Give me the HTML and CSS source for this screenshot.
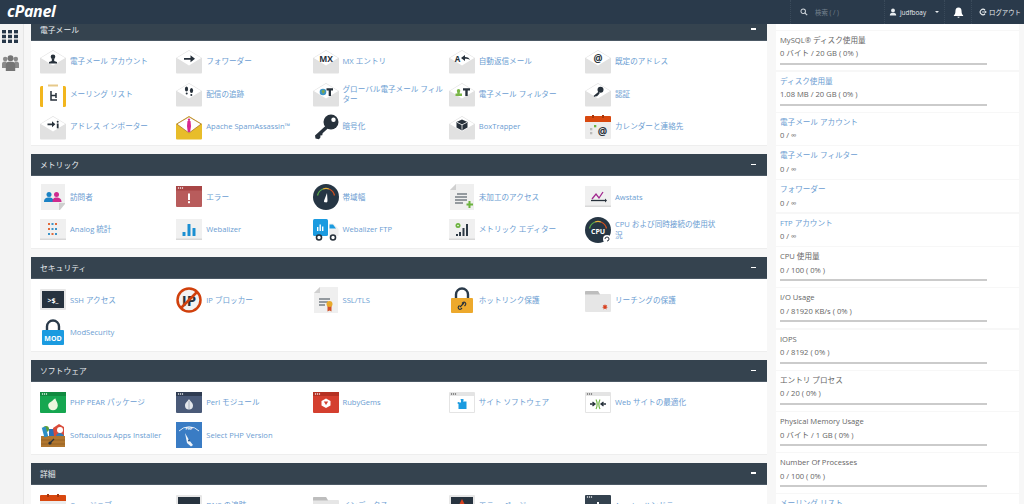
FILE: index.html
```html
<!DOCTYPE html>
<html lang="ja">
<head>
<meta charset="utf-8">
<title>cPanel</title>
<link rel="stylesheet" href="styles.css">
</head>
<body>
<svg class="sprite" aria-hidden="true">
  <defs>
    <symbol id="env" viewBox="0 0 26 26">
      <path d="M0 10 13 2 26 10V24.500a1 1 0 0 1-1 1H1a1 1 0 0 1-1-1Z" fill="#e1e1e1"/>
      <path d="M.8 10 13 2.800 25.200 10 13 17.500Z" fill="#fff"/>
    </symbol>
    <symbol id="card" viewBox="0 0 26 26">
      <rect y="2" width="26" height="21" fill="#f0f0f0"/>
      <rect y="21.500" width="26" height="1.500" fill="#d8d8d8"/>
    </symbol>
    <symbol id="doc" viewBox="0 0 26 26">
      <path d="M7 0H25V26H1V6Z" fill="#efefef"/>
      <path d="M7 0V6H1Z" fill="#d0d0d0"/>
    </symbol>
    <symbol id="cal" viewBox="0 0 26 26">
      <rect y="2" width="26" height="23" rx="1" fill="#ececec"/>
      <path d="M0 8V3a1 1 0 0 1 1-1H25a1 1 0 0 1 1 1V8Z" fill="#d8480f"/>
      <rect x="7" y="1" width="2" height="3" fill="#a8360a"/>
      <rect x="17" y="1" width="2" height="3" fill="#a8360a"/>
    </symbol>
    <symbol id="folder" viewBox="0 0 26 26">
      <path d="M0 5a1 1 0 0 1 1-1H13L15 7H25a1 1 0 0 1 1 1V24a1 1 0 0 1-1 1H1a1 1 0 0 1-1-1Z" fill="#e6e6e6"/>
      <path d="M0 5a1 1 0 0 1 1-1H13L15 7.500H0Z" fill="#bdbdbd"/>
    </symbol>
    <symbol id="gauge" viewBox="0 0 26 26">
      <circle cx="13" cy="13" r="13" fill="#263644"/>
      <path d="M4.500 11.500A9 9 0 0 1 10 5" fill="none" stroke="#5aa84a" stroke-width="1.300"/>
      <path d="M10 5A9 9 0 0 1 16 5" fill="none" stroke="#e8b23a" stroke-width="1.300"/>
      <path d="M16 5A9 9 0 0 1 21.500 11.500" fill="none" stroke="#d4501e" stroke-width="1.300"/>
    </symbol>
    <symbol id="win" viewBox="0 0 26 26">
      <rect y="2" width="26" height="21" rx="1" fill="#e4e4e4"/>
      <rect x="1" y="6" width="24" height="16" fill="#fff"/>
      <circle cx="2.500" cy="4" r=".7" fill="#555"/><circle cx="4.500" cy="4" r=".7" fill="#555"/><circle cx="6.500" cy="4" r=".7" fill="#555"/>
    </symbol>
    <symbol id="dots" viewBox="0 0 26 26">
      <circle cx="2.500" cy="4" r=".7" fill="#fff"/><circle cx="4.500" cy="4" r=".7" fill="#fff"/><circle cx="6.500" cy="4" r=".7" fill="#fff"/>
    </symbol>
  </defs>
</svg>

<header class="topbar">
  <span class="logo">cPanel</span>
  <div class="tools">
    <div class="tool search">
      <svg class="ti" viewBox="0 0 10 10"><circle cx="4" cy="4" r="2.800" fill="none" stroke="#cfd5db" stroke-width="1.300"/><path d="M6 6 9 9" stroke="#cfd5db" stroke-width="1.500"/></svg>
      <span class="search-text">検索 ( / )</span>
    </div>
    <div class="tool user">
      <svg class="ti" viewBox="0 0 10 10"><circle cx="5" cy="3" r="2.400" fill="#e8ecef"/><path d="M1 9.500C1 6.500 3 6 5 6s4 .5 4 3.500Z" fill="#e8ecef"/></svg>
      <span>judfboay</span>
      <span class="caret"></span>
    </div>
    <div class="tool bell">
      <svg class="bi" viewBox="0 0 10 10"><path d="M5 .5C3 .5 2.200 2 2.200 4c0 2-.7 3-1.400 3.600V8.200H9.200V7.600C8.500 7 7.800 6 7.800 4 7.800 2 7 .5 5 .5Z" fill="#fff"/><path d="M4 8.800h2a1 1 0 0 1-2 0Z" fill="#fff"/></svg>
    </div>
    <div class="tool logout">
      <svg class="ti" viewBox="0 0 10 10"><path d="M7.500 2.500A3.500 3.500 0 1 0 7.500 7.500" fill="none" stroke="#e8ecef" stroke-width="1.400"/><path d="M4 5H9M7.200 3.200 9 5 7.200 6.800" fill="none" stroke="#e8ecef" stroke-width="1.200"/></svg>
      <span>ログアウト</span>
    </div>
  </div>
</header>

<div class="layout">
  <nav class="rail">
    <svg class="rail-grid" viewBox="0 0 16 13">
      <g fill="#27384a"><rect width="4" height="3.400"/><rect x="6" width="4" height="3.400"/><rect x="12" width="4" height="3.400"/><rect y="4.800" width="4" height="3.400"/><rect x="6" y="4.800" width="4" height="3.400"/><rect x="12" y="4.800" width="4" height="3.400"/><rect y="9.600" width="4" height="3.400"/><rect x="6" y="9.600" width="4" height="3.400"/><rect x="12" y="9.600" width="4" height="3.400"/></g>
    </svg>
    <svg class="rail-users" viewBox="0 0 17 16">
      <g fill="#8a8a8a"><circle cx="3.200" cy="4" r="2.300"/><circle cx="13.800" cy="4" r="2.300"/><path d="M0 13V9a2.500 2.500 0 0 1 2.500-2.500h2V13Z"/><path d="M17 13V9a2.500 2.500 0 0 0-2.500-2.500h-2V13Z"/></g>
      <g fill="#757575"><circle cx="8.500" cy="3.200" r="3"/><path d="M3.800 16V9.500A3 3 0 0 1 6.800 6.800h3.400a3 3 0 0 1 3 2.700V16Z"/></g>
    </svg>
  </nav>

  <main class="main">
    <section class="panel">
      <h2 class="panel-head"><span>電子メール</span><i class="minus"></i></h2>
      <div class="grid">
        <a class="item"><svg class="ic" viewBox="0 0 26 26"><use href="#env"/><circle cx="13" cy="8.700" r="2.300" fill="#27313b"/><path d="M11.800 10.500h2.400v2.500l2.800 1v1.500H9V14l2.800-1Z" fill="#27313b"/></svg><span>電子メール アカウント</span></a>
        <a class="item"><svg class="ic" viewBox="0 0 26 26"><use href="#env"/><path d="M8 10h6.500V7.300L19 10.800l-4.500 3.500V11.700H8Z" fill="#27313b"/></svg><span>フォワーダー</span></a>
        <a class="item"><svg class="ic" viewBox="0 0 26 26"><use href="#env"/><text x="13" y="13.500" class="ict" font-size="8.500">MX</text></svg><span>MX エントリ</span></a>
        <a class="item"><svg class="ic" viewBox="0 0 26 26"><use href="#env"/><text x="8.500" y="13.500" class="ict" font-size="8">A</text><path d="M12 10l4-3v2c3 0 4 1 5 3-1.500-1-3-1.200-5-1.200V13Z" fill="#27313b"/></svg><span>自動返信メール</span></a>
        <a class="item"><svg class="ic" viewBox="0 0 26 26"><use href="#env"/><text x="13" y="14" class="ict" font-size="10">@</text></svg><span>既定のアドレス</span></a>

        <a class="item"><svg class="ic" viewBox="0 0 26 26"><rect y="5" width="26" height="21" rx="1.500" fill="#f2b61e"/><rect x="3" y="4" width="20" height="22" fill="#fff"/><path d="M8 3.500h10v2H8Z" fill="#e6c98a"/><path d="M11 10v9h6M11 14.500h5M16 12v5" fill="none" stroke="#27313b" stroke-width="1.500"/></svg><span>メーリング リスト</span></a>
        <a class="item"><svg class="ic" viewBox="0 0 26 26"><use href="#env"/><ellipse cx="10.500" cy="8" rx="1.600" ry="2.500" fill="#27313b"/><circle cx="10.700" cy="12.500" r="1" fill="#27313b"/><ellipse cx="15.500" cy="9.500" rx="1.600" ry="2.500" fill="#27313b"/><circle cx="15.300" cy="14" r="1" fill="#27313b"/></svg><span>配信の追跡</span></a>
        <a class="item"><svg class="ic" viewBox="0 0 26 26"><use href="#env"/><circle cx="10" cy="11" r="3.300" fill="#3a93c8"/><path d="M8.500 10l2-1.500 1.500 2-2 2.500Z" fill="#7fa64a"/><path d="M13.500 7.200h6.500V9.500h-2V15H15.700V9.500h-2.200Z" fill="#27313b"/></svg><span>グローバル電子メール フィルター</span></a>
        <a class="item"><svg class="ic" viewBox="0 0 26 26"><use href="#env"/><path d="M8 7a1.800 1.800 0 0 1 1.800 1.800L9 11.500h2.500V14H5V11.500H7L6.300 8.800A1.800 1.800 0 0 1 8 7Z" fill="#7ab648" transform="translate(1.500 1)"/><path d="M14 7.200h7V9.500h-2.300V15H16.300V9.500H14Z" fill="#27313b"/></svg><span>電子メール フィルター</span></a>
        <a class="item"><svg class="ic" viewBox="0 0 26 26"><use href="#env"/><circle cx="15.500" cy="8.800" r="3" fill="#27313b"/><path d="M13.800 10.500 8.500 15l1.300 1 1.200-1 .8.600 2.800-3Z" fill="#27313b"/></svg><span>認証</span></a>

        <a class="item"><svg class="ic" viewBox="0 0 26 26"><use href="#env"/><path d="M7.500 9.500h4.500V7.300l3.300 3-3.300 3V11.200H7.500Z" fill="#27313b"/><rect x="16.800" y="9.500" width="1.800" height="4.800" fill="#27313b"/><circle cx="17.700" cy="7.800" r="1" fill="#27313b"/></svg><span>アドレス インポーター</span></a>
        <a class="item"><svg class="ic" viewBox="0 0 26 26"><path d="M0 10 13 2 26 10V24.500a1 1 0 0 1-1 1H1a1 1 0 0 1-1-1Z" fill="#e8bd2a"/><path d="M.8 10 13 2.800 25.200 10 13 19Z" fill="#fff" stroke="#a9772a" stroke-width=".8"/><path d="M11.500 7h3l.5 5-.8 6h-2.400l-.8-6Z" fill="#d8278f"/><circle cx="13" cy="5.800" r="1.200" fill="#d8278f"/></svg><span>Apache SpamAssassin™</span></a>
        <a class="item"><svg class="ic" viewBox="0 0 26 26"><circle cx="18" cy="8" r="7.500" fill="#27313b"/><circle cx="20.500" cy="5.700" r="2.200" fill="#fff"/><path d="M13 11.500 2 21.500l.5 3 3.500.8 1.500-2-.2-1.800 2-.3.300-2 6-5.500Z" fill="#27313b"/></svg><span>暗号化</span></a>
        <a class="item"><svg class="ic" viewBox="0 0 26 26"><use href="#env"/><path d="M13 5.500 18.500 8v5.500L13 16.500 7.500 13.500V8Z" fill="#27313b"/><path d="M8 8.300 13 10.800 18 8.300M13 10.800v5" fill="none" stroke="#fff" stroke-width=".8"/></svg><span>BoxTrapper</span></a>
        <a class="item"><svg class="ic" viewBox="0 0 26 26"><use href="#cal"/><rect x="5" y="14" width="2.300" height="2.300" fill="#bbb"/><rect x="5" y="18" width="2.300" height="2.300" fill="#bbb"/><rect x="9" y="11" width="2.300" height="2.300" fill="#6cb33f"/><text x="17.500" y="21" class="ict" font-size="10.500">@</text></svg><span>カレンダーと連絡先</span></a>
      </div>
    </section>

    <section class="panel">
      <h2 class="panel-head"><span>メトリック</span><i class="minus"></i></h2>
      <div class="grid">
        <a class="item"><svg class="ic" viewBox="0 0 26 26"><path d="M1 0H25V19L19 26H1Z" fill="#efefef"/><path d="M25 19V20L20 26H19V19Z" fill="#cfcfcf"/><circle cx="9" cy="10.500" r="2.500" fill="#1b82c4"/><path d="M4 18c0-3.500 2-4.500 5-4.500s4.500 1 4.500 4.500Z" fill="#1b82c4"/><circle cx="16.500" cy="10.500" r="2.500" fill="#cf2a8e"/><path d="M12.500 18c0-3.500 1.500-4.500 4-4.500s5 1 5 4.500Z" fill="#cf2a8e"/></svg><span>訪問者</span></a>
        <a class="item"><svg class="ic" viewBox="0 0 26 26"><rect y="2" width="26" height="21" rx="1" fill="#b85c5c"/><rect x="0" y="2" width="26" height="4.500" fill="#a84545"/><use href="#dots"/><rect x="12" y="9.500" width="2" height="6.500" fill="#fff"/><rect x="12" y="17.200" width="2" height="2" fill="#fff"/></svg><span>エラー</span></a>
        <a class="item"><svg class="ic" viewBox="0 0 26 26"><use href="#gauge"/><path d="M14 9l.5 7.500a1.700 1.700 0 1 1-3.200-.6Z" fill="#fff"/></svg><span>帯域幅</span></a>
        <a class="item"><svg class="ic" viewBox="0 0 26 26"><use href="#doc"/><path d="M8 10h10M6 13h12M6 16h12M6 19h8" stroke="#3a4650" stroke-width="1.200"/><path d="M17.500 19.500h2V17h2v2.500H24v2h-2.500V24h-2v-2.500h-2Z" fill="#6cb33f"/></svg><span>未加工のアクセス</span></a>
        <a class="item"><svg class="ic" viewBox="0 0 26 26"><use href="#card"/><path d="M7 15 11 10l3 4 4-6" fill="none" stroke="#a2288f" stroke-width="1.300"/><path d="M6 16.500H20" stroke="#27313b" stroke-width="1.300"/><path d="M20 14.500 22 16.500 20 18.500Z" fill="#27313b"/></svg><span>Awstats</span></a>

        <a class="item"><svg class="ic" viewBox="0 0 26 26"><use href="#card"/><g fill="#e26a3a"><rect x="8" y="6" width="2" height="2"/><rect x="15" y="6" width="2" height="2"/><rect x="8" y="11" width="2" height="2"/><rect x="11.500" y="16" width="2" height="2"/></g><g fill="#3a93c8"><rect x="11.500" y="6" width="2" height="2"/><rect x="11.500" y="11" width="2" height="2"/><rect x="15" y="11" width="2" height="2"/><rect x="8" y="16" width="2" height="2"/><rect x="15" y="16" width="2" height="2"/></g></svg><span>Analog 統計</span></a>
        <a class="item"><svg class="ic" viewBox="0 0 26 26"><use href="#card"/><g fill="#1b8fd2"><rect x="6.500" y="15" width="3" height="4" rx=".5"/><rect x="11.500" y="7" width="3" height="12" rx=".5"/><rect x="16.500" y="11" width="3" height="8" rx=".5"/></g></svg><span>Webalizer</span></a>
        <a class="item"><svg class="ic" viewBox="0 0 26 26"><rect x="0" y="2" width="15" height="17" rx="1.500" fill="#1b9be0"/><path d="M16 6.500h4.500L25.500 12v7H16Z" fill="#f0f0f0"/><path d="M16.500 7.500h3.500l3 4h-6.500Z" fill="#1b9be0"/><g fill="#fff"><rect x="4" y="10" width="1.400" height="4"/><rect x="6.500" y="7.500" width="1.400" height="6.500"/><rect x="9" y="9.500" width="1.400" height="4.500"/></g><circle cx="6" cy="20.500" r="2.500" fill="#fff" stroke="#27313b" stroke-width="1.600"/><circle cx="20" cy="20.500" r="2.500" fill="#fff" stroke="#27313b" stroke-width="1.600"/></svg><span>Webalizer FTP</span></a>
        <a class="item"><svg class="ic" viewBox="0 0 26 26"><use href="#card"/><circle cx="9" cy="8.500" r="2.500" fill="#6cb33f"/><circle cx="9" cy="8.500" r=".8" fill="#fff"/><g fill="#2e3a45"><rect x="7" y="17" width="2" height="2"/><rect x="10" y="15" width="2" height="4"/><rect x="13.500" y="11" width="2" height="8"/><rect x="17" y="7" width="2" height="12"/></g></svg><span>メトリック エディター</span></a>
        <a class="item"><svg class="ic" viewBox="0 0 26 26"><use href="#gauge"/><text x="13" y="16.500" class="ict wt" font-size="7">CPU</text><circle cx="22" cy="22" r="4" fill="#fff"/><path d="M20 22a2 2 0 1 1 2 2" fill="none" stroke="#27313b" stroke-width="1"/></svg><span>CPU および同時接続の使用状況</span></a>
      </div>
    </section>

    <section class="panel">
      <h2 class="panel-head"><span>セキュリティ</span><i class="minus"></i></h2>
      <div class="grid">
        <a class="item"><svg class="ic" viewBox="0 0 26 26"><rect y="2" width="26" height="21" rx="1" fill="#e7e7e7"/><rect x="2" y="4" width="22" height="17" fill="#27333f"/><text x="13" y="15.500" class="ict wt" font-size="7">&gt;$_</text></svg><span>SSH アクセス</span></a>
        <a class="item"><svg class="ic" viewBox="0 0 26 26"><circle cx="13" cy="13" r="11.500" fill="#f2f2f2" stroke="#d0400c" stroke-width="2.500"/><text x="13" y="18.500" class="ict" font-size="15">IP</text><path d="M5 21 21 5" stroke="#d0400c" stroke-width="2.500"/></svg><span>IP ブロッカー</span></a>
        <a class="item"><svg class="ic" viewBox="0 0 26 26"><use href="#doc"/><path d="M6 12H17M6 15H15M6 18H12" stroke="#3a4650" stroke-width="1.200"/><path d="M14.500 19h4v5.500l-2-1-2 1Z" fill="#d0522a"/><circle cx="16.500" cy="17" r="3" fill="#e8a92c"/></svg><span>SSL/TLS</span></a>
        <a class="item"><svg class="ic" viewBox="0 0 26 26"><path d="M7 12V7.500a6 6 0 0 1 12 0V12" fill="none" stroke="#2a3a4a" stroke-width="2.400"/><rect x="2" y="11" width="22" height="15" rx="1" fill="#eda92c"/><path d="M11 20l4-4M10.500 18.500l-1 1a1.800 1.800 0 0 0 2.500 2.500l1-1M13 16.500l1-1a1.800 1.800 0 0 1 2.500 2.500l-1 1" fill="none" stroke="#27313b" stroke-width="1.100"/></svg><span>ホットリンク保護</span></a>
        <a class="item"><svg class="ic" viewBox="0 0 26 26"><use href="#folder"/><path d="M20 17l.6 1.600 1.600-.6-.8 1.500 1.500.8-1.600.5.3 1.700-1.600-.9-1.600.9.300-1.700-1.600-.5 1.500-.8-.8-1.500 1.600.6Z" fill="#d8401f"/></svg><span>リーチングの保護</span></a>

        <a class="item"><svg class="ic" viewBox="0 0 26 26"><path d="M7 12V7.500a6 6 0 0 1 12 0V12" fill="none" stroke="#2a3a4a" stroke-width="2.400"/><rect x="2" y="11" width="22" height="15" rx="1" fill="#1b9be0"/><text x="13" y="21.500" class="ict wt" font-size="7">MOD</text></svg><span>ModSecurity</span></a>
      </div>
    </section>

    <section class="panel">
      <h2 class="panel-head"><span>ソフトウェア</span><i class="minus"></i></h2>
      <div class="grid">
        <a class="item"><svg class="ic" viewBox="0 0 26 26"><rect y="2" width="26" height="21" rx="1" fill="#16a650"/><rect y="2" width="26" height="4" fill="#118a40"/><use href="#dots"/><path d="M15.500 8.500c0 2 2.300 3.500 2.300 7a4.800 4.800 0 0 1-9.600 0c0-3 3-3.500 4.500-5 1-1 1.500-2 2.800-2Z" fill="#eaf6dd"/></svg><span>PHP PEAR パッケージ</span></a>
        <a class="item"><svg class="ic" viewBox="0 0 26 26"><rect y="2" width="26" height="21" rx="1" fill="#4a5a78"/><rect y="2" width="26" height="4" fill="#2f3c52"/><use href="#dots"/><path d="M13 9c1 2 4 3.500 4 6.500a4 4 0 0 1-8 0c0-3 3-4.500 4-6.500Z" fill="#e4e7ec"/><path d="M13 11v8" stroke="#9aa3b2" stroke-width=".8"/></svg><span>Perl モジュール</span></a>
        <a class="item"><svg class="ic" viewBox="0 0 26 26"><rect y="2" width="26" height="21" rx="1" fill="#d43f2f"/><rect y="2" width="26" height="4" fill="#b53224"/><use href="#dots"/><path d="M13 8.500l4.500 2.500v4.500L13 18l-4.500-2.500V11Z" fill="#fff"/><path d="M10.800 11.500h4.400l-2.200 3.500Z" fill="#d43f2f"/></svg><span>RubyGems</span></a>
        <a class="item"><svg class="ic" viewBox="0 0 26 26"><use href="#win"/><path d="M11.500 9h3v1.800l-.5.700h3.500V19H9.500v-5l-1-.4.200-1.400 1-.2.800.5h1.500V10.800Z" fill="#1b9be0"/></svg><span>サイト ソフトウェア</span></a>
        <a class="item"><svg class="ic" viewBox="0 0 26 26"><use href="#win"/><path d="M11 9.500c1.500 3 1.500 6.500 0 9.500M15 9.500c-1.500 3-1.500 6.500 0 9.500" fill="none" stroke="#6cb33f" stroke-width="1.100"/><path d="M5 14h5M7.500 12l2.500 2-2.500 2M21 14h-5M18.500 12 16 14l2.500 2" fill="none" stroke="#27313b" stroke-width="1.300"/></svg><span>Web サイトの最適化</span></a>

        <a class="item"><svg class="ic" viewBox="0 0 26 26"><path d="M1 14H25V25H1Z" fill="#b0762f"/><path d="M1 18H25M1 22H25" stroke="#8e5c20" stroke-width=".7"/><circle cx="6" cy="7" r="3" fill="#5c9e35"/><rect x="3" y="5" width="4" height="10" fill="#2c8fc7" transform="rotate(-15 5 10)"/><rect x="9" y="7" width="5" height="7" fill="#2a6fb5"/><path d="M13 6l6-4 5 3v9H14Z" fill="#d94b3a"/><circle cx="20" cy="8" r="3" fill="#fff"/><path d="M16 14c1-4 6-4 8 0Z" fill="#2f7fb8"/><path d="M9 22l5-5" stroke="#27313b" stroke-width="1.300"/><circle cx="10" cy="21" r="1.600" fill="#27313b"/></svg><span>Softaculous Apps Installer</span></a>
        <a class="item"><svg class="ic" viewBox="0 0 26 26"><rect width="26" height="26" fill="#3a7cc4"/><path d="M3 9A14 14 0 0 1 23 9" fill="none" stroke="#dce9f6" stroke-width="1"/><text x="13" y="8" class="ict wt" font-size="3.500">PHP</text><path d="M9 11l4 7 4 5-2 1.500-4-3.500Z" fill="#eef4fa"/><circle cx="13" cy="18.500" r="1" fill="#27517e"/></svg><span>Select PHP Version</span></a>
      </div>
    </section>

    <section class="panel">
      <h2 class="panel-head"><span>詳細</span><i class="minus"></i></h2>
      <div class="grid">
        <a class="item"><svg class="ic" viewBox="0 0 26 26"><use href="#cal"/></svg><span>Cron ジョブ</span></a>
        <a class="item"><svg class="ic" viewBox="0 0 26 26"><rect y="2" width="26" height="21" rx="1" fill="#e7e7e7"/><rect x="2" y="4" width="22" height="17" fill="#27333f"/><text x="13" y="15" class="ict wt" font-size="6">DNS</text></svg><span>DNS の追跡</span></a>
        <a class="item"><svg class="ic" viewBox="0 0 26 26"><use href="#folder"/></svg><span>インデックス</span></a>
        <a class="item"><svg class="ic" viewBox="0 0 26 26"><rect y="2" width="26" height="21" rx="1" fill="#e7e7e7"/><rect x="2" y="4" width="22" height="17" fill="#27333f"/><path d="M13 6l3 6h-6Z" fill="#d8401f"/></svg><span>エラー ページ</span></a>
        <a class="item"><svg class="ic" viewBox="0 0 26 26"><rect y="2" width="26" height="21" rx="1" fill="#34424f"/><use href="#dots"/><rect x="12" y="9" width="2" height="4" fill="#fff"/></svg><span>Apache ハンドラー</span></a>
      </div>
    </section>
  </main>

  <aside class="stats">
    <div class="stat-cut"></div>
    <div class="stat"><div class="lbl">MySQL® ディスク使用量</div><div class="val">0 バイト / 20 GB ( 0% )</div><div class="bar"></div></div>
    <div class="stat"><a class="lbl lnk">ディスク使用量</a><div class="val">1.08 MB / 20 GB ( 0% )</div><div class="bar"></div></div>
    <div class="stat"><a class="lbl lnk">電子メール アカウント</a><div class="val">0 / ∞</div></div>
    <div class="stat"><a class="lbl lnk">電子メール フィルター</a><div class="val">0 / ∞</div></div>
    <div class="stat"><a class="lbl lnk">フォワーダー</a><div class="val">0 / ∞</div></div>
    <div class="stat"><a class="lbl lnk">FTP アカウント</a><div class="val">0 / ∞</div></div>
    <div class="stat"><div class="lbl">CPU 使用量</div><div class="val">0 / 100 ( 0% )</div><div class="bar"></div></div>
    <div class="stat"><div class="lbl">I/O Usage</div><div class="val">0 / 81920 KB/s ( 0% )</div><div class="bar"></div></div>
    <div class="stat"><div class="lbl">IOPS</div><div class="val">0 / 8192 ( 0% )</div><div class="bar"></div></div>
    <div class="stat"><div class="lbl">エントリ プロセス</div><div class="val">0 / 20 ( 0% )</div><div class="bar"></div></div>
    <div class="stat"><div class="lbl">Physical Memory Usage</div><div class="val">0 バイト / 1 GB ( 0% )</div><div class="bar"></div></div>
    <div class="stat"><div class="lbl">Number Of Processes</div><div class="val">0 / 100 ( 0% )</div><div class="bar"></div></div>
    <div class="stat"><a class="lbl lnk">メーリング リスト</a><div class="val">0 / ∞</div></div>
  </aside>
</div>
</body>
</html>
```
FILE: styles.css
```css
* { box-sizing: border-box; }
html, body { height: 504px; overflow: hidden; }
body {
  margin: 0;
  background: #f7f7f7;
  font-family: "Open Sans", "Noto Sans CJK JP", sans-serif;
  font-size: 7.600px;
  color: #666;
}
.sprite { position: absolute; width: 0; height: 0; }

.topbar {
  position: relative;
  z-index: 2;
  display: flex;
  align-items: center;
  justify-content: space-between;
  height: 24px;
  background: #2a3a4b;
  color: #e8ecef;
}
.logo {
  padding: 0 0 3px 7px;
  font: italic 700 16px "Open Sans", sans-serif;
  letter-spacing: -.3px;
  color: #fff;
}
.tools { display: flex; height: 24px; white-space: nowrap; }
.tool {
  display: flex;
  align-items: center;
  gap: 3px;
  border-left: 1px dotted #3a4a5a;
  font-size: 6.400px;
}
.search { width: 94px; padding-left: 9px; gap: 4px; }
.search-text { color: #76838f; margin-left: 3px; }
.user { width: 60px; padding-left: 4px; }
.caret {
  margin-left: 6px;
  border: 2.500px solid transparent;
  border-top-color: #e8ecef;
  border-bottom: 0;
}
.bell { width: 27px; padding-left: 8px; }
.logout { width: 53px; padding-left: 7px; gap: 2px; }
.ti { width: 8px; height: 8px; flex: none; }
.bi { width: 11px; height: 11px; }

.layout { display: flex; align-items: flex-start; }
.rail {
  flex: none;
  width: 24px;
  height: 480px;
  display: flex;
  flex-direction: column;
  align-items: flex-start;
  padding: 6px 0 0 1.500px;
  gap: 12px;
  background: #f3f3f3;
  border-right: 1px solid #e6e6e6;
}
.rail-grid { width: 16px; height: 13px; }
.rail-users { width: 17px; height: 16px; }

.main {
  flex: none;
  width: 736px;
  margin: -5.500px 0 0 7px;
}
.panel { margin-bottom: 8px; background: #fff; border-bottom: 1px solid #eee; }
.panel-head {
  display: flex;
  align-items: center;
  justify-content: space-between;
  height: 22px;
  margin: 0;
  padding: 0 11px 0 9px;
  background: #35434f;
  border-bottom: 1px solid #4c5965;
  color: #e9edf0;
  font-size: 7.800px;
  font-weight: 400;
}
.minus { width: 5.500px; height: 1.500px; background: #fff; }
.grid {
  display: grid;
  grid-template-columns: repeat(5, 136.250px);
  grid-auto-rows: 32.700px;
  padding: 4.500px 0 2px;
}
.item {
  display: flex;
  align-items: center;
  gap: 4px;
  padding-left: 9px;
  color: #6b9dd2;
  line-height: 10.500px;
}
.item span { flex: none; max-width: 106px; }
.ic { flex: none; width: 26px; height: 26px; }
.ict {
  font-family: "Open Sans", sans-serif;
  font-weight: 700;
  fill: #27313b;
  text-anchor: middle;
}
.ict.wt { fill: #fff; }

.stats { flex: none; width: 243px; margin-left: 9px; }
.stat-cut { height: 5.500px; margin-bottom: 1px; background: #fff; }
.stat {
  margin-bottom: 1.300px;
  padding: 3px 4px 2.300px;
  background: #fff;
  line-height: 13.500px;
}
.lbl { display: block; }
.lnk { color: #6b9dd2; }
.val { display: block; }
.bar {
  width: 207px;
  height: 2px;
  margin: 2px 0 3.600px;
  background: #cbcbcb;
}
```
